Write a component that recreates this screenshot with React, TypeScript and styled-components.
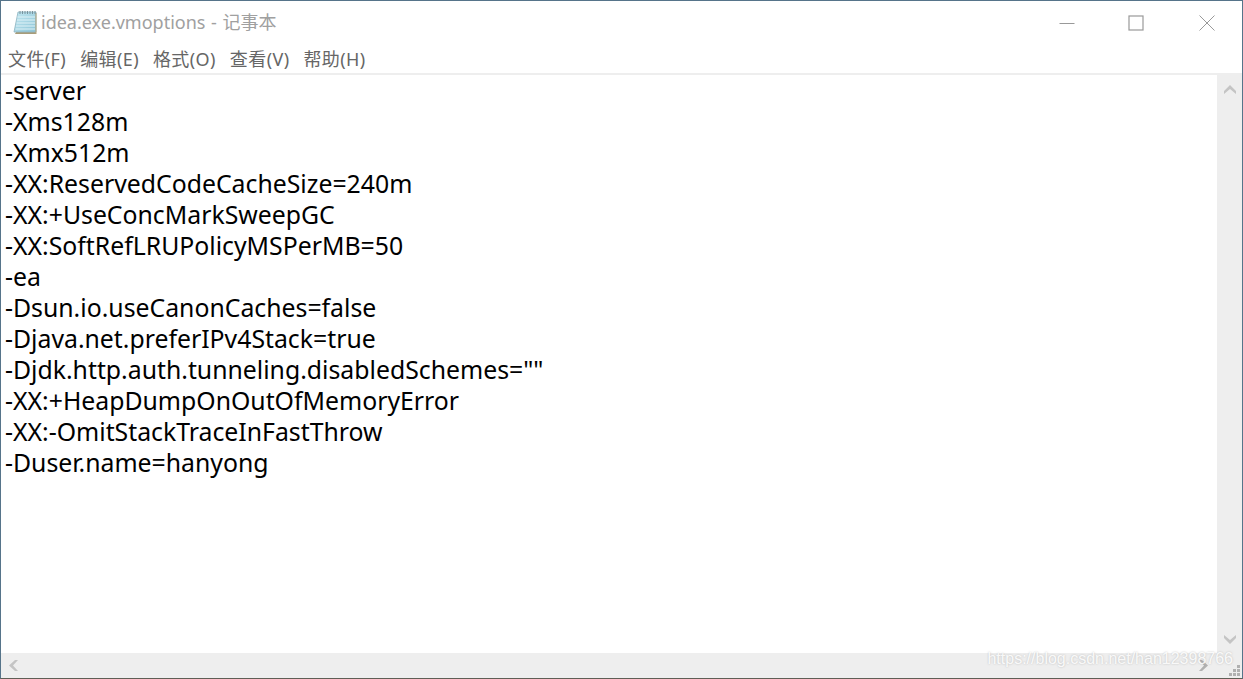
import styled, { createGlobalStyle } from "styled-components"

const lines = [
    "-server",
    "-Xms128m",
    "-Xmx512m",
    "-XX:ReservedCodeCacheSize=240m",
    "-XX:+UseConcMarkSweepGC",
    "-XX:SoftRefLRUPolicyMSPerMB=50",
    "-ea",
    "-Dsun.io.useCanonCaches=false",
    "-Djava.net.preferIPv4Stack=true",
    '-Djdk.http.auth.tunneling.disabledSchemes=""',
    "-XX:+HeapDumpOnOutOfMemoryError",
    "-XX:-OmitStackTraceInFastThrow",
    "-Duser.name=hanyong",
]

const menus = ["文件(F)", "编辑(E)", "格式(O)", "查看(V)", "帮助(H)"]

const NotepadIcon = () => (
    <svg width="24" height="25" viewBox="0 0 24 25">
        <defs>
            <linearGradient id="pad" x1="0" y1="0" x2="1" y2="1">
                <stop offset="0" stopColor="#c4e8f2" />
                <stop offset="1" stopColor="#8cc4d6" />
            </linearGradient>
        </defs>
        <path d="M4 20 L23 20 L23 24 L2 24 Z" fill="#a99c78" />
        <path d="M5 2 L23 2 L23 22 L1 22 Z" fill="url(#pad)" stroke="#8fb4c0" strokeWidth="0.8" />
        <path d="M22.5 3 L23.5 3 L23.5 24 L22.5 24 Z" fill="#b5a67e" />
        <path d="M4.5 7 H22 M4 10 H22 M3.5 13 H22 M3 16 H22 M2.5 19 H22" stroke="#dff2f7" strokeWidth="1" />
        <path d="M7 1 V4 M9.5 1 V4 M12 1 V4 M14.5 1 V4 M17 1 V4 M19.5 1 V4 M22 1 V4" stroke="#7a949e" strokeWidth="1" />
    </svg>
)

export default () => {

    return (
        <Frame>
            <GlobalStyle />
            <TitleBar>
                <TitleIcon>
                    <NotepadIcon />
                </TitleIcon>
                <TitleText>idea.exe.vmoptions - 记事本</TitleText>
                <WindowButton $nudge={4}>
                    <svg width="16" height="16" viewBox="0 0 16 16">
                        <path d="M0.5 8.5 H15.5" stroke="#999" strokeWidth="1" />
                    </svg>
                </WindowButton>
                <WindowButton>
                    <svg width="16" height="16" viewBox="0 0 16 16">
                        <rect x="1" y="1" width="14" height="14" fill="none" stroke="#999" strokeWidth="1.2" />
                    </svg>
                </WindowButton>
                <WindowButton>
                    <svg width="16" height="16" viewBox="0 0 16 16">
                        <path d="M0.5 0.5 L15.5 15.5 M15.5 0.5 L0.5 15.5" stroke="#999" strokeWidth="1" />
                    </svg>
                </WindowButton>
            </TitleBar>
            <MenuBar>
                {menus.map((m) => (
                    <MenuItem key={m}>{m}</MenuItem>
                ))}
            </MenuBar>
            <Body>
                <Editor>
                    {lines.map((l) => (
                        <Line key={l}>{l}</Line>
                    ))}
                </Editor>
                <VScroll>
                    <Arrow>
                        <svg width="12" height="9" viewBox="0 0 12 9">
                            <path d="M6 0 L12 6 L12 9 L6 4 L0 9 L0 6 Z" fill="#c4c4c4" />
                        </svg>
                    </Arrow>
                    <Arrow>
                        <svg width="12" height="9" viewBox="0 0 12 9">
                            <path d="M6 9 L12 3 L12 0 L6 5 L0 0 L0 3 Z" fill="#c4c4c4" />
                        </svg>
                    </Arrow>
                </VScroll>
            </Body>
            <HScroll>
                <Arrow>
                    <svg width="9" height="11" viewBox="0 0 9 11">
                        <path d="M0 5.5 L6 0 L9 0 L4 5.5 L9 11 L6 11 Z" fill="#c4c4c4" />
                    </svg>
                </Arrow>
                <Arrow>
                    <svg width="9" height="11" viewBox="0 0 9 11">
                        <path d="M9 5.5 L3 0 L0 0 L5 5.5 L0 11 L3 11 Z" fill="#b0b0b0" />
                    </svg>
                </Arrow>
                <Grip>
                    <svg width="12" height="12" viewBox="0 0 12 12" fill="#b0b0b0">
                        <rect x="8" y="0" width="3" height="3" />
                        <rect x="4" y="4" width="3" height="3" />
                        <rect x="8" y="4" width="3" height="3" />
                        <rect x="0" y="8" width="3" height="3" />
                        <rect x="4" y="8" width="3" height="3" />
                        <rect x="8" y="8" width="3" height="3" />
                    </svg>
                </Grip>
                <Watermark>https://blog.csdn.net/han12398766</Watermark>
            </HScroll>
        </Frame>
    )
}

const GlobalStyle = createGlobalStyle`
    html, body {
        margin:0;
        padding:0;
        background:#fff;
    }
`

const Frame = styled.div`
    box-sizing:border-box;
    display:flex;
    flex-direction:column;
    width:1243px;
    height:679px;
    background:#fff;
    border:1px solid #56748a;
    border-bottom:1px solid #5f5e55;
    font-family:"Noto Sans","Noto Sans CJK SC",sans-serif;
    overflow:hidden;
`

const TitleBar = styled.div`
    display:flex;
    align-items:center;
    height:43px;
    flex-shrink:0;
`

const TitleIcon = styled.div`
    display:flex;
    margin-left:12px;
    margin-right:4px;
`

const TitleText = styled.div`
    flex-grow:2;
    padding-bottom:3px;
    color:#a0a0a0;
    font-size:18px;
    word-spacing:1px;
`

const WindowButton = styled.div<{ $nudge?: number }>`
    box-sizing:border-box;
    display:flex;
    align-items:center;
    justify-content:center;
    width:71px;
    height:43px;
    padding-left:${(p) => p.$nudge ?? 0}px;
`

const MenuBar = styled.div`
    display:flex;
    align-items:center;
    gap:14px;
    height:31px;
    padding:0 0 2px 7px;
    box-sizing:border-box;
    flex-shrink:0;
    border-bottom:2px solid #eeeeee;
`

const MenuItem = styled.div`
    color:#666;
    font-size:18px;
    letter-spacing:0.4px;
`

const Body = styled.div`
    display:flex;
    flex-grow:2;
    min-height:0;
`

const Editor = styled.div`
    flex-grow:2;
    padding-left:4px;
    color:#000;
    font-size:24.8px;
    line-height:31px;
`

const Line = styled.div`
    white-space:pre;
`

const VScroll = styled.div`
    display:flex;
    flex-direction:column;
    justify-content:space-between;
    align-items:center;
    width:25px;
    padding:10px 0 9px;
    box-sizing:border-box;
    background:#eeeeee;
`

const Arrow = styled.div`
    display:flex;
`

const HScroll = styled.div`
    position:relative;
    display:flex;
    align-items:center;
    justify-content:space-between;
    height:25px;
    padding:0 34px 0 8px;
    flex-shrink:0;
    background:#eeeeee;
`

const Grip = styled.div`
    position:absolute;
    right:1px;
    bottom:1px;
    display:flex;
`

const Watermark = styled.div`
    position:absolute;
    right:9px;
    top:-3px;
    color:rgba(255,255,255,0.9);
    font-family:"Liberation Sans",sans-serif;
    font-size:16px;
    text-shadow:0 0 2px rgba(140,140,140,0.55);
`
